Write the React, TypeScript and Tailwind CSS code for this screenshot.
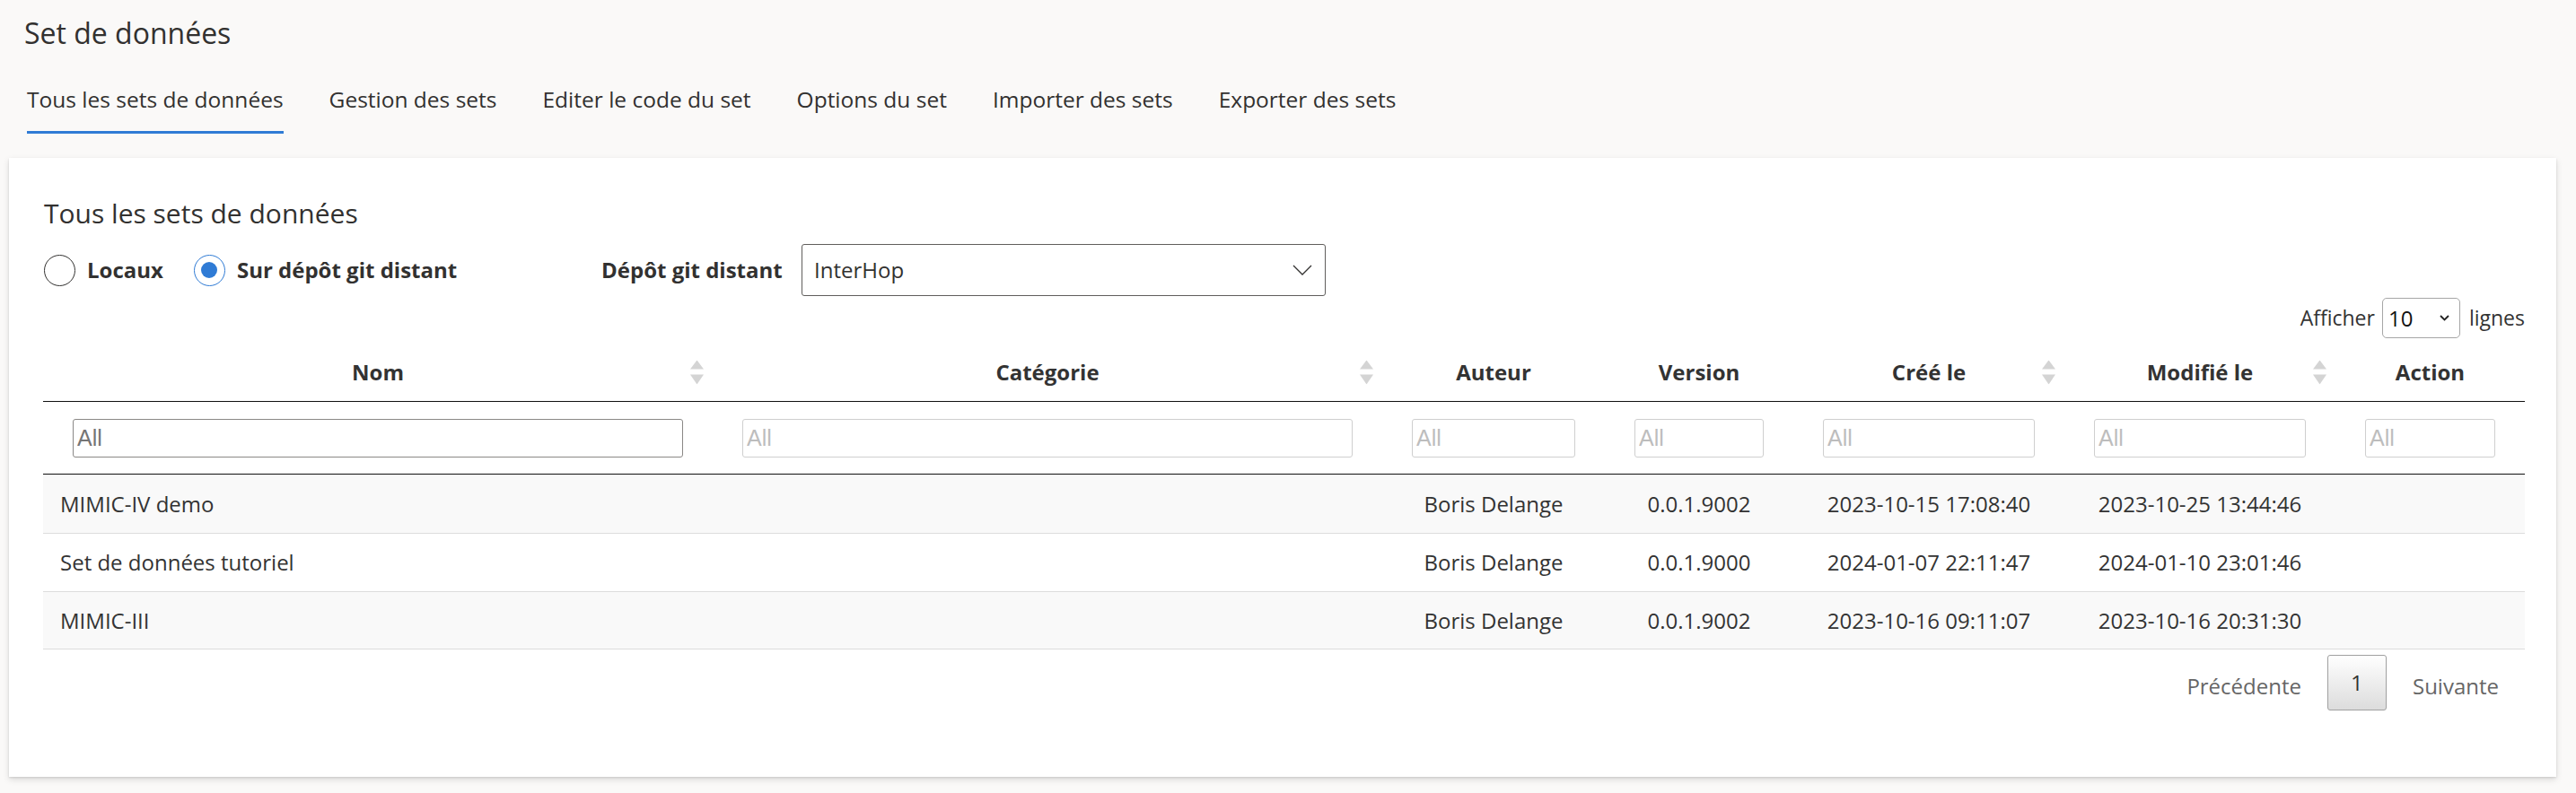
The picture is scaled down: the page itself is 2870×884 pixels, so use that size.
import { useState } from "react";

const TABS = [
  "Tous les sets de données",
  "Gestion des sets",
  "Editer le code du set",
  "Options du set",
  "Importer des sets",
  "Exporter des sets",
];

const COLS = [
  { label: "Nom", col: "w-[746px]", sort: true },
  { label: "Catégorie", col: "w-[746px]", sort: true },
  { label: "Auteur", col: "w-[248px]", sort: false },
  { label: "Version", col: "w-[210px]", sort: false },
  { label: "Créé le", col: "w-[302px]", sort: true },
  { label: "Modifié le", col: "w-[302px]", sort: true },
  { label: "Action", col: "w-[211px]", sort: false },
];

const ROWS = [
  { nom: "MIMIC-IV demo", auteur: "Boris Delange", version: "0.0.1.9002", cree: "2023-10-15 17:08:40", modifie: "2023-10-25 13:44:46" },
  { nom: "Set de données tutoriel", auteur: "Boris Delange", version: "0.0.1.9000", cree: "2024-01-07 22:11:47", modifie: "2024-01-10 23:01:46" },
  { nom: "MIMIC-III", auteur: "Boris Delange", version: "0.0.1.9002", cree: "2023-10-16 09:11:07", modifie: "2023-10-16 20:31:30" },
];

function SortIcon() {
  return (
    <svg width="15" height="27" viewBox="0 0 15 27" className="absolute right-[10px] top-1/2 -translate-y-1/2">
      <polygon points="7.5,0 15,10 0,10" fill="#d4d4d4" />
      <polygon points="0,16 15,16 7.5,27" fill="#d4d4d4" />
    </svg>
  );
}

function Radio({ checked, label, onClick }: { checked: boolean; label: string; onClick: () => void }) {
  return (
    <button onClick={onClick} className="flex items-center">
      <span
        className={
          checked
            ? "flex h-[35px] w-[35px] items-center justify-center rounded-full border border-[#2f7bd5]"
            : "flex h-[35px] w-[35px] items-center justify-center rounded-full border border-[#323130]"
        }
      >
        {checked && <span className="h-[18px] w-[18px] rounded-full bg-[#2f7bd5]" />}
      </span>
      <span className="ml-[13px] whitespace-nowrap text-[24px] font-bold text-[#323130]">{label}</span>
    </button>
  );
}

export default function App() {
  const [tab, setTab] = useState(0);
  const [remote, setRemote] = useState(true);

  return (
    <div className="min-h-[884px] bg-[#faf9f8] font-['Open_Sans',sans-serif] text-[#323130]">
      {/* En-tête */}
      <div className="pl-[26px] pt-[17px]">
        <h1 className="pl-px text-[32px] leading-[40px]">Set de données</h1>
        <div className="mt-[38px] flex gap-[43px]">
          {TABS.map((t, i) => (
            <button key={t} onClick={() => setTab(i)} className="flex flex-col px-[4px]">
              <span className="whitespace-nowrap text-[24.5px] leading-[32px]">{t}</span>
              <span className={i === tab ? "mt-[19px] h-[3px] w-full bg-[#2f7bd5]" : "mt-[19px] h-[3px] w-full"} />
            </button>
          ))}
        </div>
      </div>

      {/* Carte */}
      <div className="ml-[10px] mr-[22px] mt-[27px] h-[690px] bg-white pl-[38px] pr-[35px] pt-[42px] shadow-[0_3px_7px_rgba(0,0,0,0.13),0_1px_2px_rgba(0,0,0,0.11)]">
        <h2 className="pl-px text-[30px] leading-[40px]">Tous les sets de données</h2>

        <div className="mt-[14px] flex h-[58px] items-center">
          <div className="flex w-[622px] items-center pl-px">
            <Radio checked={!remote} label="Locaux" onClick={() => setRemote(false)} />
            <div className="ml-[34px]">
              <Radio checked={remote} label="Sur dépôt git distant" onClick={() => setRemote(true)} />
            </div>
          </div>
          <span className="w-[223px] whitespace-nowrap text-[24px] font-bold">Dépôt git distant</span>
          <div className="flex h-[58px] w-[584px] items-center justify-between rounded-[3px] border border-[#605e5c] pl-[13px] pr-[14px]">
            <span className="text-[24px]">InterHop</span>
            <svg width="22" height="12" viewBox="0 0 22 12">
              <polyline points="1,1 11,11 21,1" fill="none" stroke="#323130" strokeWidth="1.3" />
            </svg>
          </div>
        </div>

        <div className="mt-[2px] flex h-[45px] items-center justify-end text-[23px] text-[#333]">
          <span>Afficher</span>
          <div className="ml-[8px] mr-[10px] flex h-[45px] w-[87px] items-center justify-between rounded-[5px] border border-[#a6a6a6] pl-[6px] pr-[11px]">
            <span className="text-[24px] text-[#111]">10</span>
            <svg width="11" height="7" viewBox="0 0 11 7">
              <polyline points="1,1 5.5,5.5 10,1" fill="none" stroke="#222" strokeWidth="1.8" />
            </svg>
          </div>
          <span>lignes</span>
        </div>

        {/* Tableau */}
        <table className="mt-[5px] w-full table-fixed border-separate border-spacing-0 text-[24px] text-[#333]">
          <colgroup>
            {COLS.map((c) => (
              <col key={c.label} className={c.col} />
            ))}
          </colgroup>
          <thead>
            <tr>
              {COLS.map((c) => (
                <th key={c.label} className="relative h-[66px] border-b border-[#111] text-center font-bold">
                  {c.label}
                  {c.sort && <SortIcon />}
                </th>
              ))}
            </tr>
            <tr>
              {COLS.map((c, i) => (
                <th key={c.label} className="h-[81px] border-b border-[#111] px-[33px] font-normal">
                  <input
                    placeholder="All"
                    className={
                      i === 0
                        ? "h-[43px] w-full rounded-[3px] border border-[#8a8886] px-[4px] font-['Liberation_Sans',sans-serif] text-[25px] placeholder:text-[#757575]"
                        : "h-[43px] w-full rounded-[3px] border border-[#cfcfcf] px-[4px] font-['Liberation_Sans',sans-serif] text-[25px] placeholder:text-[#bdbdbd]"
                    }
                  />
                </th>
              ))}
            </tr>
          </thead>
          <tbody>
            {ROWS.map((r, i) => {
              const bg = i % 2 === 0 ? "bg-[#f9f9f9]" : "bg-white";
              const border = i === 0 ? "" : "border-t border-[#ddd]";
              const last = i === ROWS.length - 1 ? "border-b border-[#111]" : "";
              const cell = `h-[65px] ${bg} ${border} ${last}`;
              return (
                <tr key={r.nom}>
                  <td className={`${cell} pl-[19px] text-left`}>{r.nom}</td>
                  <td className={cell} />
                  <td className={`${cell} text-center`}>{r.auteur}</td>
                  <td className={`${cell} text-center`}>{r.version}</td>
                  <td className={`${cell} text-center`}>{r.cree}</td>
                  <td className={`${cell} text-center`}>{r.modifie}</td>
                  <td className={cell} />
                </tr>
              );
            })}
          </tbody>
        </table>

        <div className="mt-[6px] flex h-[62px] items-center justify-end text-[24px] text-[#666]">
          <span className="px-[29px] pt-[8px]">Précédente</span>
          <span className="flex h-[62px] w-[66px] items-center justify-center rounded-[3px] border border-[#a0a0a0] bg-linear-to-b from-white to-[#dcdcdc] text-[#333]">
            1
          </span>
          <span className="px-[29px] pt-[8px]">Suivante</span>
        </div>
      </div>
    </div>
  );
}
